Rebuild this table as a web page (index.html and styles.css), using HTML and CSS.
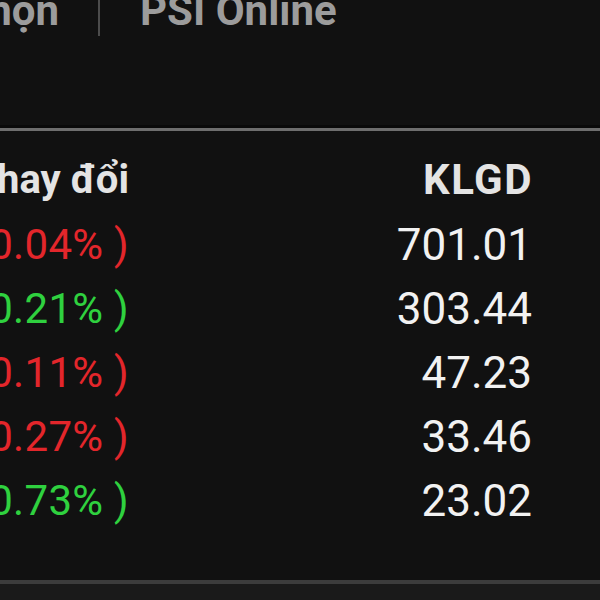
FILE: index.html
```html
<!DOCTYPE html>
<html lang="vi">
<head>
<meta charset="utf-8">
<link rel="stylesheet" href="styles.css">
</head>
<body>
<div class="screen">
  <div class="tabs">
    <div class="tab-cell tab-left"><span class="tab">Lựa chọn</span></div>
    <div class="tab-sep"></div>
    <span class="tab">PSI Online</span>
  </div>
  <div class="rule"></div>
  <div class="table">
    <div class="row head">
      <div class="chg"><span>Thay đổi</span></div>
      <div></div>
      <div class="vol">KLGD</div>
    </div>
    <div class="row">
      <div class="chg down"><span>-0.40 ( -0.04% )</span></div>
      <div></div>
      <div class="vol">701.01</div>
    </div>
    <div class="row">
      <div class="chg up"><span>+0.20 ( +0.21% )</span></div>
      <div></div>
      <div class="vol">303.44</div>
    </div>
    <div class="row">
      <div class="chg down"><span>-0.10 ( -0.11% )</span></div>
      <div></div>
      <div class="vol">47.23</div>
    </div>
    <div class="row">
      <div class="chg down"><span>-0.20 ( -0.27% )</span></div>
      <div></div>
      <div class="vol">33.46</div>
    </div>
    <div class="row">
      <div class="chg up"><span>+0.60 ( +0.73% )</span></div>
      <div></div>
      <div class="vol">23.02</div>
    </div>
  </div>
  <div class="bottom-rule"></div>
  <div class="footer"></div>
</div>
</body>
</html>
```
FILE: styles.css
```css
html, body {
  margin: 0;
  padding: 0;
  background: #111111;
}
body {
  width: 600px;
  height: 600px;
  overflow: hidden;
  font-family: Roboto, "Noto Sans", "Liberation Sans", sans-serif;
}
.screen {
  width: 600px;
  height: 600px;
  display: flex;
  flex-direction: column;
  overflow: hidden;
}
.tabs {
  display: flex;
  align-items: flex-start;
  height: 36px;
}
.tab-cell {
  display: flex;
  justify-content: flex-end;
  white-space: nowrap;
}
.tab-left {
  width: 59px;
}
.tab {
  font-size: 42px;
  font-weight: 700;
  line-height: 22px;
  color: #9c9c9c;
  white-space: nowrap;
}
.tab-sep {
  width: 2px;
  height: 36px;
  background: #4c4c4c;
  margin: 0 40px 0 39px;
}
.rule {
  margin-top: 92px;
  height: 3px;
  background: #6e6e6e;
  box-shadow: 0 -3px 0 #0a0a0a;
}
.table {
  margin-top: 17px;
  display: flex;
  flex-direction: column;
}
.row {
  display: grid;
  grid-template-columns: 129px 1fr auto;
  padding-right: 68px;
  height: 64px;
  line-height: 64px;
  font-size: 44px;
  color: #f2f2f2;
}
.row.head {
  height: 65px;
  font-size: 42px;
  font-weight: 700;
  color: #e4e4e4;
}
.row.head .vol {
  letter-spacing: 1.5px;
  margin-right: -1px;
}
.chg {
  display: flex;
  justify-content: flex-end;
  white-space: nowrap;
  min-width: 0;
  font-size: 42px;
  letter-spacing: 0.3px;
}
.row.head .chg {
  font-size: 40px;
  letter-spacing: 0;
}
.down { color: #e3262b; }
.up { color: #2fd13f; }
.vol {
  text-align: right;
  white-space: nowrap;
}
.bottom-rule {
  margin-top: 47px;
  height: 4px;
  background: #3c3c3c;
}
.footer {
  flex: 1;
  background: #1a1a1a;
}
```
